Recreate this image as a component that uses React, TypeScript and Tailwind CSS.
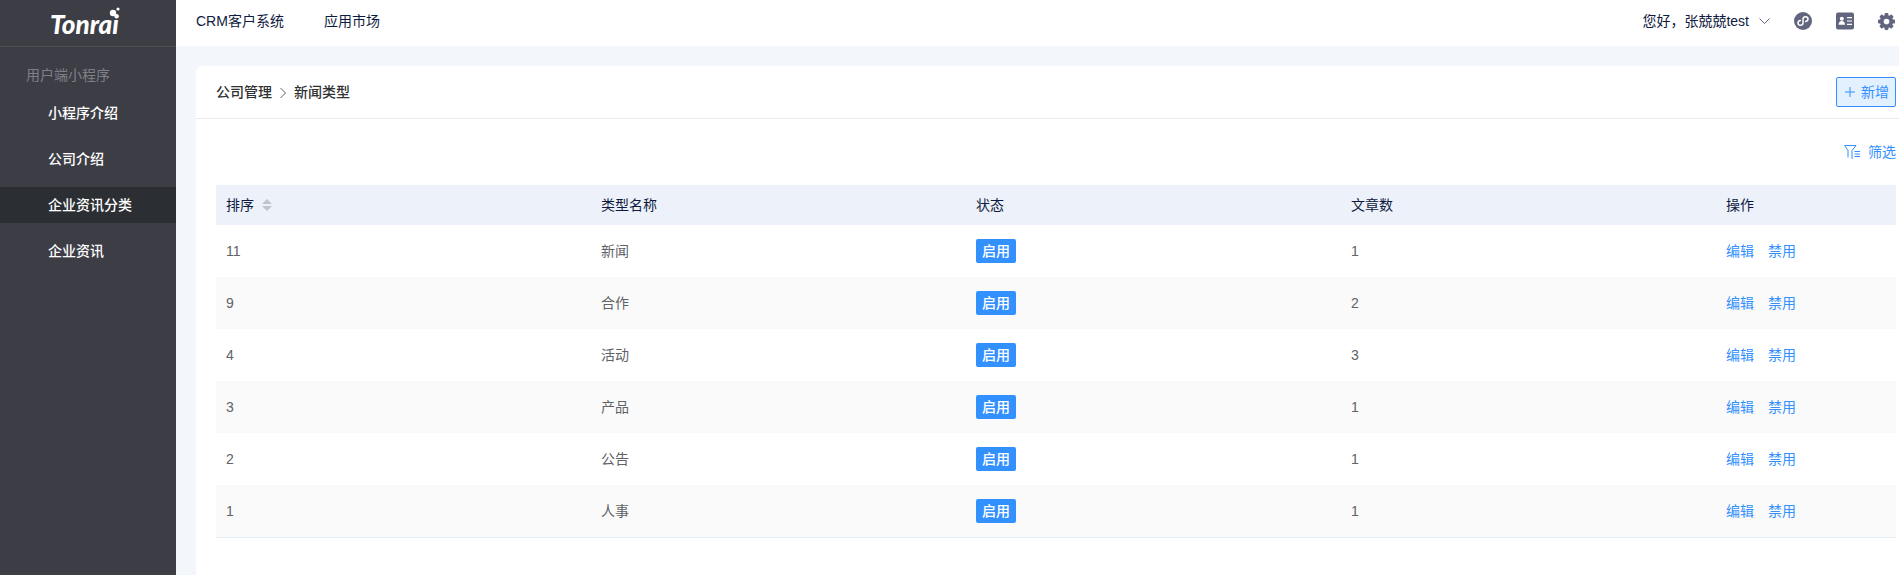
import React from 'react';
import clsx from 'clsx';

const menuItems = [
  { name: '小程序介绍', active: false },
  { name: '公司介绍', active: false },
  { name: '企业资讯分类', active: true },
  { name: '企业资讯', active: false },
];

const rows = [
  { sort: 11, name: '新闻', count: 1 },
  { sort: 9, name: '合作', count: 2 },
  { sort: 4, name: '活动', count: 3 },
  { sort: 3, name: '产品', count: 1 },
  { sort: 2, name: '公告', count: 1 },
  { sort: 1, name: '人事', count: 1 },
];

const Logo = () => (
  <svg width="80" height="40" viewBox="0 0 80 40" role="img" aria-label="Tonrai">
    <text
      x="2"
      y="30"
      fill="#fff"
      fontFamily="Lato, sans-serif"
      fontSize="26"
      fontWeight="900"
      fontStyle="italic"
    >
      Tonrai
    </text>
    <circle cx="65" cy="9" r="3.2" fill="#fff" />
    <circle cx="70" cy="5" r="1.6" fill="#fff" />
  </svg>
);

const MiniProgramIcon = () => (
  <svg width="18" height="18" viewBox="0 0 18 18">
    <circle cx="9" cy="9" r="9" fill="#62657e" />
    <path
      d="M6.4 8.500C5 8.700 4 9.600 4 10.900a2.500 2.300 0 0 0 5 0V7.100a2.500 2.300 0 0 1 5 0c0 1.300-1 2.200-2.400 2.400"
      fill="none"
      stroke="#fff"
      strokeWidth="1.5"
      strokeLinecap="round"
    />
  </svg>
);

const ContactIcon = () => (
  <svg width="18" height="18" viewBox="0 0 18 18">
    <rect x="0" y="0.5" width="18" height="17" rx="2" fill="#62657e" />
    <circle cx="5.8" cy="6.8" r="2" fill="#fff" />
    <path d="M2.6 12.8c0-2.6 1.2-3.8 3.2-3.8S9 10.200 9 12.800z" fill="#fff" />
    <path d="M11 5.700h5M11 9h5M11 12.300h5" stroke="#fff" strokeWidth="1.2" />
  </svg>
);

const GearIcon = () => (
  <svg width="17" height="17" viewBox="0 0 18 18" fill="#62657e">
    <circle cx="9" cy="9" r="5" fill="none" stroke="#62657e" strokeWidth="4" />
    {[0, 45, 90, 135].map((angle) => (
      <g key={angle} transform={`rotate(${angle} 9 9)`}>
        <rect x="7" y="0" width="4" height="4" rx="1" />
        <rect x="7" y="14" width="4" height="4" rx="1" />
      </g>
    ))}
  </svg>
);

const FilterIcon = () => (
  <svg width="16" height="16" viewBox="0 0 16 16" fill="none" stroke="#3390ff">
    <path d="M0.500 1.500h11.500l-4 5v8.500M0.500 1.500l3.500 5v7" />
    <path d="M10.500 7.500H16M10.500 10H16M10.500 12.500H16" />
  </svg>
);

const Sidebar = () => (
  <aside className="w-44 shrink-0 bg-[#3d3d46] text-white">
    <div className="flex h-[47px] items-start justify-center border-b border-[#4c4d52] pt-1">
      <Logo />
    </div>
    <div className="flex h-12 items-center pt-2 pl-[26px] text-[#7d8087]">用户端小程序</div>
    <nav className="flex flex-col gap-2.5">
      {menuItems.map((item) => (
        <a
          key={item.name}
          href="#"
          className={clsx('flex h-9 items-center pl-12 font-medium', item.active && 'bg-[#2b2f33]')}
        >
          {item.name}
        </a>
      ))}
    </nav>
  </aside>
);

const TopBar = () => (
  <header className="flex h-[46px] items-center justify-between bg-white pr-1 pb-1 pl-5 text-[#0f1a40]">
    <nav className="flex gap-10">
      <a href="#">CRM客户系统</a>
      <a href="#">应用市场</a>
    </nav>
    <div className="flex items-center gap-6">
      <button type="button" className="flex items-center gap-2.5">
        您好，张兢兢test
        <svg width="11" height="7" viewBox="0 0 11 7" fill="none" stroke="#62657e">
          <path d="M0.500 0.500l5 5 5-5" />
        </svg>
      </button>
      <button type="button" aria-label="小程序"><MiniProgramIcon /></button>
      <button type="button" aria-label="名片"><ContactIcon /></button>
      <button type="button" aria-label="设置"><GearIcon /></button>
    </div>
  </header>
);

const NewsTable = () => (
  <table className="w-full table-fixed border-separate border-spacing-0 border-b border-[#e6eef8] text-left text-[#606266]">
    <colgroup>
      <col />
      <col />
      <col />
      <col />
      <col className="w-[180px]" />
    </colgroup>
    <thead>
      <tr className="h-10 bg-[#edf2fa] text-[#0f1a40]">
        <th className="px-2.5 font-normal">
          <button type="button" className="flex items-center gap-2">
            排序
            <svg width="10" height="12" viewBox="0 0 10 12" fill="#c0c4cc">
              <path d="M5 0l5 5H0zM5 12l5-5H0z" />
            </svg>
          </button>
        </th>
        <th className="px-2.5 font-normal">类型名称</th>
        <th className="px-2.5 font-normal">状态</th>
        <th className="px-2.5 font-normal">文章数</th>
        <th className="px-2.5 font-normal">操作</th>
      </tr>
    </thead>
    <tbody>
      {rows.map((row) => (
        <tr key={row.sort} className="h-[52px] even:bg-[#fafafa]">
          <td className="px-2.5">{row.sort}</td>
          <td className="px-2.5">{row.name}</td>
          <td className="px-2.5">
            <span className="flex h-6 w-10 items-center justify-center rounded-xs bg-[#3390ff] font-medium text-white">
              启用
            </span>
          </td>
          <td className="px-2.5">{row.count}</td>
          <td className="px-2.5">
            <div className="flex gap-3.5 text-[#3390ff]">
              <a href="#">编辑</a>
              <a href="#">禁用</a>
            </div>
          </td>
        </tr>
      ))}
    </tbody>
  </table>
);

const App = () => {
  return (
    <div className="flex min-h-screen bg-[#f3f7fb] font-['Liberation_Sans','Noto_Sans_CJK_SC',sans-serif] text-sm">
      <Sidebar />
      <div className="flex min-w-0 flex-1 flex-col">
        <TopBar />
        <main className="mt-5 ml-5 flex-1 rounded-tl-md bg-white">
          <div className="flex h-[53px] items-center justify-between border-b border-[#ebebed] pr-[3px] pl-5">
            <div className="flex items-center gap-2 font-medium text-[#303133]">
              <a href="#">公司管理</a>
              <svg width="6" height="13" viewBox="0 0 6 13" fill="none" stroke="#606266">
                <path d="M0.500 2l5 5-5 5" />
              </svg>
              <span>新闻类型</span>
            </div>
            <button
              type="button"
              className="flex h-[30px] w-[60px] items-center justify-center gap-1.5 rounded-xs border border-[#3390ff] bg-[#e3f0ff] pl-0.5 text-[#3390ff]"
            >
              <svg width="10" height="10" viewBox="0 0 10 10" stroke="#3390ff">
                <path d="M0 5h10M5 0v10" />
              </svg>
              新增
            </button>
          </div>
          <div className="pr-[3px] pl-5">
            <div className="flex h-[66px] items-center justify-end">
              <button type="button" className="flex items-center gap-2 text-[#3390ff]">
                <FilterIcon />
                筛选
              </button>
            </div>
            <NewsTable />
          </div>
        </main>
      </div>
    </div>
  );
};

export default App;
